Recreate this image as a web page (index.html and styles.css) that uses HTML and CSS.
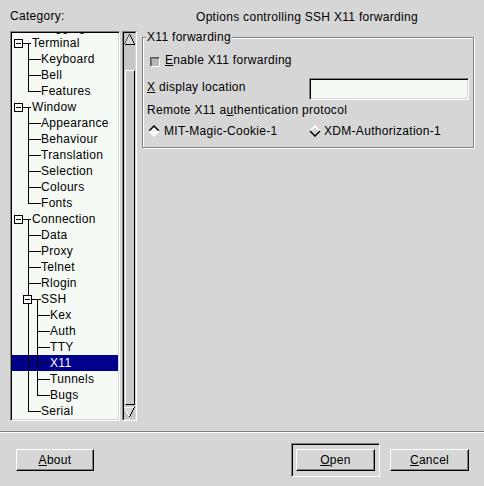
FILE: index.html
```html
<!DOCTYPE html>
<html>
<head>
<meta charset="utf-8">
<link rel="stylesheet" href="styles.css">
</head>
<body>
<div class="win">
  <div class="main">
    <div class="left">
      <div class="cat-label">Cate<u>g</u>ory:</div>
      <div class="tree-wrap">
        <div class="tree">
          <div class="list">
            <div class="row l1 peek">Logging</div>
            <div class="row l0">Terminal</div>
            <div class="row l1">Keyboard</div>
            <div class="row l1">Bell</div>
            <div class="row l1">Features</div>
            <div class="row l0">Window</div>
            <div class="row l1">Appearance</div>
            <div class="row l1">Behaviour</div>
            <div class="row l1">Translation</div>
            <div class="row l1">Selection</div>
            <div class="row l1">Colours</div>
            <div class="row l1">Fonts</div>
            <div class="row l0">Connection</div>
            <div class="row l1">Data</div>
            <div class="row l1">Proxy</div>
            <div class="row l1">Telnet</div>
            <div class="row l1">Rlogin</div>
            <div class="row l1">SSH</div>
            <div class="row l2">Kex</div>
            <div class="row l2">Auth</div>
            <div class="row l2">TTY</div>
            <div class="row l2 sel">X11</div>
            <div class="row l2">Tunnels</div>
            <div class="row l2">Bugs</div>
            <div class="row l1">Serial</div>
            <svg class="lines" width="106" height="400" viewBox="0 0 106 400">
              <g stroke="#000" stroke-width="1" fill="none">
                <line x1="16.5" y1="0" x2="16.5" y2="9"/>
                <line x1="16" y1="8.5" x2="29" y2="8.5"/>
                <line x1="11" y1="24.5" x2="19" y2="24.5"/>
                <line x1="16.5" y1="24" x2="16.5" y2="73"/>
                <line x1="16" y1="40.5" x2="29" y2="40.5"/>
                <line x1="16" y1="56.5" x2="29" y2="56.5"/>
                <line x1="16" y1="72.5" x2="29" y2="72.5"/>
                <line x1="11" y1="88.5" x2="19" y2="88.5"/>
                <line x1="16.5" y1="88" x2="16.5" y2="185"/>
                <line x1="16" y1="104.5" x2="29" y2="104.5"/>
                <line x1="16" y1="120.5" x2="29" y2="120.5"/>
                <line x1="16" y1="136.5" x2="29" y2="136.5"/>
                <line x1="16" y1="152.5" x2="29" y2="152.5"/>
                <line x1="16" y1="168.5" x2="29" y2="168.5"/>
                <line x1="16" y1="184.5" x2="29" y2="184.5"/>
                <line x1="11" y1="200.5" x2="19" y2="200.5"/>
                <line x1="16.5" y1="200" x2="16.5" y2="393"/>
                <line x1="16" y1="216.5" x2="29" y2="216.5"/>
                <line x1="16" y1="232.5" x2="29" y2="232.5"/>
                <line x1="16" y1="248.5" x2="29" y2="248.5"/>
                <line x1="16" y1="264.5" x2="29" y2="264.5"/>
                <line x1="16" y1="392.5" x2="29" y2="392.5"/>
                <line x1="20" y1="280.5" x2="29" y2="280.5"/>
                <line x1="25.5" y1="280" x2="25.5" y2="377"/>
                <line x1="25" y1="296.5" x2="38" y2="296.5"/>
                <line x1="25" y1="312.5" x2="38" y2="312.5"/>
                <line x1="25" y1="328.5" x2="38" y2="328.5"/>
                <line x1="25" y1="344.5" x2="38" y2="344.5"/>
                <line x1="25" y1="360.5" x2="38" y2="360.5"/>
                <line x1="25" y1="376.5" x2="38" y2="376.5"/>
              </g>
              <g stroke="#000" stroke-width="1" fill="#f5faf5">
                <rect x="2.5" y="20.5" width="8" height="8"/>
                <rect x="2.5" y="84.5" width="8" height="8"/>
                <rect x="2.5" y="196.5" width="8" height="8"/>
                <rect x="11.5" y="276.5" width="8" height="8"/>
              </g>
              <g stroke="#000" stroke-width="1">
                <line x1="4" y1="24.5" x2="9" y2="24.5"/>
                <line x1="4" y1="88.5" x2="9" y2="88.5"/>
                <line x1="4" y1="200.5" x2="9" y2="200.5"/>
                <line x1="13" y1="280.5" x2="18" y2="280.5"/>
              </g>
            </svg>
          </div>
        </div>
        <div class="sb">
          <div class="sb-in">
            <svg class="arrow" width="11" height="13" viewBox="0 0 11 13">
              <polygon points="5.5,1 10.5,11 0.5,11" fill="#d6d6d6"/>
              <line x1="0.5" y1="11" x2="5.5" y2="1" stroke="#555"/>
              <line x1="5.5" y1="1" x2="10.5" y2="11" stroke="#000"/>
              <line x1="0.5" y1="11.5" x2="11" y2="11.5" stroke="#000"/>
            </svg>
            <div class="sb-gap"></div>
            <div class="slider"></div>
            <div class="sb-gap2"></div>
            <svg class="arrow" width="11" height="13" viewBox="0 0 11 13">
              <polygon points="0.5,1 10.5,1 5.5,11" fill="#d6d6d6"/>
              <line x1="0" y1="1.5" x2="10.5" y2="1.5" stroke="#fff"/>
              <line x1="0.5" y1="1" x2="5.5" y2="11" stroke="#fff"/>
              <line x1="10.5" y1="1" x2="5.5" y2="11.5" stroke="#000"/>
            </svg>
          </div>
        </div>
      </div>
    </div>
    <div class="right">
      <div class="title">Options controlling SSH X11 forwarding</div>
      <fieldset class="group">
        <legend>X11 forwarding</legend>
        <div class="chk-row"><span class="chk"></span><span><u>E</u>nable X11 forwarding</span></div>
        <div class="grid2 loc-row">
          <div class="lbl"><u>X</u> display location</div>
          <div class="entry"></div>
        </div>
        <div class="proto"><span>Remote X11 a<u>u</u>thentication protocol</span></div>
        <div class="grid2 radios">
          <div class="radio r1">
            <svg class="dia" width="12" height="12" viewBox="0 0 12 12">
              <polygon points="6,1 11,6 6,11 1,6" fill="#fafafa"/>
              <polyline points="1,6 6,1 11,6" fill="none" stroke="#000" stroke-width="1.5"/>
              <polyline points="1,6 6,11 11,6" fill="none" stroke="#fff" stroke-width="1.5"/>
            </svg>MIT-Magic-Cookie-1</div>
          <div class="radio r2">
            <svg class="dia" width="12" height="12" viewBox="0 0 12 12">
              <polygon points="6,1 11,6 6,11 1,6" fill="#d6d6d6"/>
              <polyline points="1,6 6,1 11,6" fill="none" stroke="#fff" stroke-width="1.5"/>
              <polyline points="1,6 6,11 11,6" fill="none" stroke="#000" stroke-width="1.5"/>
            </svg>XDM-Authorization-1</div>
        </div>
      </fieldset>
    </div>
  </div>
  <div class="sep"></div>
  <div class="buttons">
    <div class="btn about"><u>A</u>bout</div>
    <div class="spacer"></div>
    <div class="default-frame"><div class="btn open"><u>O</u>pen</div></div>
    <div class="btn cancel"><u>C</u>ancel</div>
  </div>
</div>
</body>
</html>
```

FILE: styles.css
```css
html, body {
  margin: 0;
  padding: 0;
}
body {
  background: #d6d6d6;
  font-family: "Liberation Sans", Arial, sans-serif;
  font-size: 12px;
  line-height: 14px;
  letter-spacing: 0.3px;
  color: #000;
}
u {
  text-decoration: underline;
  text-underline-offset: 1px;
}
svg {
  display: block;
  shape-rendering: crispEdges;
}
.dia {
  shape-rendering: auto;
}
.win {
  width: 484px;
  height: 486px;
  overflow: hidden;
}
.main {
  display: flex;
  height: 431px;
}
.left {
  width: 127px;
  margin-left: 10px;
  padding-top: 9px;
}
.cat-label {
  height: 14px;
  margin-bottom: 8px;
}
.tree-wrap {
  display: flex;
  gap: 2px;
  height: 390px;
}
.tree {
  width: 110px;
  height: 390px;
  box-sizing: border-box;
  border: 1px solid;
  border-color: #808080 #fff #fff #808080;
  box-shadow: inset 1px 1px 0 #000, inset -1px -1px 0 #d6d6d6;
  padding: 1px;
  background: #f5faf5;
  overflow: hidden;
}
.list {
  position: relative;
  margin-top: -14px;
}
.row {
  height: 16px;
  line-height: 16px;
  white-space: nowrap;
}
.l0 { padding-left: 20px; }
.l1 { padding-left: 29px; }
.l2 { padding-left: 38px; }
.sel {
  background: #00008b;
  color: #fff;
}
.lines {
  position: absolute;
  left: 0;
  top: 0;
}
.sb {
  width: 15px;
  height: 390px;
  box-sizing: border-box;
  border: 1px solid;
  border-color: #808080 #fff #fff #808080;
  background: #c6c6c6;
}
.sb-in {
  height: 100%;
  box-sizing: border-box;
  border: 1px solid;
  border-color: #000 #d6d6d6 #d6d6d6 #000;
  display: flex;
  flex-direction: column;
}
.arrow {
  flex: none;
}
.sb-gap {
  height: 24px;
  flex: none;
}
.sb-gap2 {
  height: 1px;
  flex: none;
}
.slider {
  flex: 1;
  margin-left: 1px;
  width: 10px;
  box-sizing: border-box;
  border: 1px solid;
  border-color: #fff #000 #000 #fff;
  background: #cacaca;
}
.right {
  width: 334px;
  margin-left: 3px;
  padding-top: 10px;
}
.title {
  height: 14px;
  text-align: center;
}
.group {
  margin: 6px 0 0 2px;
  padding: 9px 4px 9px 4px;
  border: 1px solid #848484;
  box-shadow: inset 1px 1px 0 #fff, 1px 1px 0 #fff;
  min-width: 0;
}
.group legend {
  padding: 0 1px;
  margin-left: -1px;
  line-height: 14px;
  height: 14px;
  background: #d6d6d6;
}
.chk-row {
  display: flex;
  height: 14px;
}
.chk {
  width: 10px;
  height: 10px;
  margin: 4px 5px 0 3px;
  box-sizing: border-box;
  border: 1px solid;
  border-color: #5a5a5a #fff #fff #5a5a5a;
  box-shadow: inset 1px 1px 0 #7c7c7c;
  background: #b8b8b8;
}
.grid2 {
  display: grid;
  grid-template-columns: 162px 160px;
}
.loc-row {
  margin-top: 11px;
}
.lbl {
  margin-top: 2px;
}
.entry {
  height: 22px;
  box-sizing: border-box;
  border: 1px solid;
  border-color: #808080 #fff #fff #808080;
  box-shadow: inset 1px 1px 0 #000, inset -1px -1px 0 #d6d6d6;
  background: #f5faf5;
}
.proto {
  margin-top: 3px;
  height: 14px;
}
.radios {
  margin-top: 7px;
}
.radio {
  display: flex;
  align-items: center;
  height: 14px;
}
.dia {
  margin-right: 4px;
}
.r1 .dia { margin-left: 1px; }
.r2 .dia { margin-left: 0; margin-right: 3px; }
.sep {
  height: 0;
  border-top: 1px solid #808080;
  border-bottom: 1px solid #fff;
}
.buttons {
  display: flex;
  align-items: center;
  padding: 10px 15px 0 16px;
}
.spacer {
  flex: 1;
}
.btn {
  height: 22px;
  box-sizing: border-box;
  border: 1px solid;
  border-color: #fff #000 #000 #fff;
  box-shadow: inset -1px -1px 0 #808080;
  text-align: center;
  line-height: 20px;
}
.about { width: 78px; }
.open { width: 79px; }
.cancel { width: 79px; margin-left: 10px; }
.default-frame {
  border: 1px solid;
  border-color: #808080 #fff #fff #808080;
  box-shadow: inset 1px 1px 0 #000;
  padding: 5px 4px 5px 4px;
}
```
